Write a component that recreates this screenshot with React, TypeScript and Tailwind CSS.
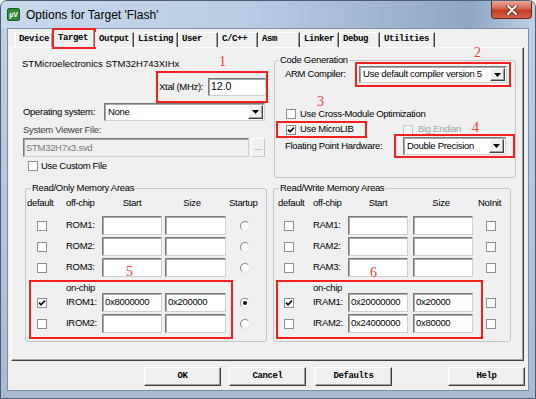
import React from 'react';

type CB = { checked?: boolean; disabled?: boolean };

function Check({ checked = false, disabled = false }: CB) {
  return (
    <span
      className={`flex shrink-0 w-[10px] h-[10px] border items-center justify-center ${
        disabled ? 'border-[#c9c9c9] bg-[#f3f3f3]' : 'border-[#8e8f8f] bg-white'
      }`}
    >
      {checked && (
        <svg width="8" height="8" viewBox="0 0 8 8">
          <polyline points="1,3.6 3,5.8 7,1.6" fill="none" stroke="#111" strokeWidth="1.7" />
        </svg>
      )}
    </span>
  );
}

function Radio({ checked = false }: { checked?: boolean }) {
  return (
    <span className="flex shrink-0 w-[10px] h-[10px] rounded-full border border-[#e2e2e2] border-t-[#8a8a8a] border-l-[#8a8a8a] bg-white items-center justify-center">
      {checked && <span className="w-[4px] h-[4px] rounded-full bg-[#111]" />}
    </span>
  );
}

function Edit({ className = '', value = '', disabled = false }: { className?: string; value?: string; disabled?: boolean }) {
  return (
    <div
      className={`shrink-0 border border-[#d0d0d0] border-t-[#7a7a7a] border-l-[#7a7a7a] shadow-[inset_1px_1px_0_#a8a8a8] pl-[2px] pt-[1px] leading-[13px] overflow-hidden whitespace-nowrap ${
        disabled ? 'bg-[#f0f0f0] text-[#7a7a7a]' : 'bg-white text-black'
      } ${className}`}
    >
      {value}
    </div>
  );
}

function Combo({ className = '', value }: { className?: string; value: string }) {
  return (
    <div className={`shrink-0 flex bg-white border border-[#d0d0d0] border-t-[#7a7a7a] border-l-[#7a7a7a] shadow-[inset_1px_1px_0_#a8a8a8] p-[1px] pl-[2px] ${className}`}>
      <div className="flex-1 flex items-center pl-[1px] whitespace-nowrap overflow-hidden">{value}</div>
      <div className="w-[15px] shrink-0 flex items-center justify-center bg-[#f0f0f0] border border-t-white border-l-white border-r-[#404040] border-b-[#404040] shadow-[inset_-1px_-1px_0_#a0a0a0]">
        <svg width="7" height="4" viewBox="0 0 7 4">
          <polygon points="0,0 7,0 3.5,4" fill="#000" />
        </svg>
      </div>
    </div>
  );
}

function Btn({ label, className = '' }: { label: string; className?: string }) {
  return (
    <div
      className={`w-[77px] h-[19px] flex items-center justify-center bg-[#f0f0f0] border border-t-white border-l-white border-r-[#404040] border-b-[#404040] shadow-[inset_-1px_-1px_0_#a0a0a0] font-['Liberation_Mono',monospace] font-bold text-[9px] tracking-[-0.4px] ${className}`}
    >
      {label}
    </div>
  );
}

const tabs: { label: string; w: string; sel?: boolean }[] = [
  { label: 'Device', w: 'w-[38px]' },
  { label: 'Target', w: 'w-[42px]', sel: true },
  { label: 'Output', w: 'w-[39px]' },
  { label: 'Listing', w: 'w-[44px]' },
  { label: 'User', w: 'w-[40px]' },
  { label: 'C/C++', w: 'w-[40px]' },
  { label: 'Asm', w: 'w-[42px]' },
  { label: 'Linker', w: 'w-[39px]' },
  { label: 'Debug', w: 'w-[41px]' },
  { label: 'Utilities', w: 'w-[55px]' },
];

function Num({ n, className }: { n: string; className: string }) {
  return (
    <span className={`absolute font-['Liberation_Serif',serif] text-[14px] leading-none tracking-normal text-[#f03c3c] ${className}`}>{n}</span>
  );
}

const RED = 'border-2 border-[#f42020]';

export default function App() {
  return (
    <div className="relative w-[536px] h-[399px] overflow-hidden rounded-t-[7px] border border-[#4d5d72] bg-[linear-gradient(180deg,#bfd1e7_0%,#b2c5dc_60%,#a7bad1_100%)] font-['Liberation_Sans',Arial,sans-serif] text-[9.5px] tracking-[-0.3px] text-black">
      {/* title bar */}
      <div className="h-[27px] flex items-center bg-[linear-gradient(90deg,#c8d9ee_0%,#b9cde5_45%,#98b0cd_78%,#8ea7c5_88%,#bed0e5_100%)]">
        <div className="ml-[6px] w-[13px] h-[13px] rounded-[2px] bg-[#2f8a3a] border border-[#1d5a25] flex items-center justify-center text-white text-[7px] font-bold leading-none tracking-normal">
          µV
        </div>
        <div className="ml-[6px] text-[12px] tracking-normal text-black">Options for Target 'Flash'</div>
      </div>
      {/* close button */}
      <div className="absolute top-0 right-[3px] w-[41px] h-[18px] rounded-b-[4px] border border-t-0 border-[#6b2416] bg-[linear-gradient(180deg,#e9a898_0%,#d3654d_45%,#c23d22_55%,#d0624a_100%)] flex items-center justify-center">
        <svg width="12" height="10" viewBox="0 0 12 10">
          <path d="M2 1 L10 9 M10 1 L2 9" stroke="#5a1a10" strokeWidth="3.4" strokeLinecap="round" />
          <path d="M2 1 L10 9 M10 1 L2 9" stroke="#ffffff" strokeWidth="2" strokeLinecap="round" />
        </svg>
      </div>

      <div className="flex h-[363px]">
        <div className="w-[6px]" />
        {/* client */}
        <div className="w-[522px] h-[363px] bg-[#f0f0f0] border border-[#7d8fa6]">
          {/* tabs */}
          <div className="h-[18px] flex items-end pl-[7px] relative z-10 font-['Liberation_Mono',monospace] font-bold text-[9px] tracking-[-0.4px]">
            {tabs.map((t) =>
              t.sel ? (
                <div
                  key={t.label}
                  className={`${t.w} h-[19px] -mb-[1px] flex items-center pl-[4px] bg-[#f0f0f0] border border-b-0 border-t-white border-l-white border-r-[#404040] shadow-[inset_-1px_0_0_#a0a0a0] outline-2 outline-[#f42020] -outline-offset-1`}
                >
                  {t.label}
                </div>
              ) : (
                <div
                  key={t.label}
                  className={`${t.w} h-[15px] flex items-center pl-[3px] bg-[#f0f0f0] border border-b-0 border-t-white border-l-white border-r-[#404040] shadow-[inset_-1px_0_0_#a0a0a0]`}
                >
                  {t.label}
                </div>
              )
            )}
          </div>

          {/* tab panel */}
          <div className="ml-[3px] w-[513px] h-[314px] flex pl-[10px] pt-[10px] border border-t-white border-l-white border-r-[#404040] border-b-[#404040] shadow-[inset_-1px_-1px_0_#a0a0a0]">
            {/* left column */}
            <div className="w-[246px] flex flex-col">
              <div className="h-[12px] leading-[12px] tracking-normal">STMicroelectronics STM32H743XIHx</div>
              <div className={`mt-[1px] ml-[134px] w-[112px] h-[32px] ${RED} flex items-center justify-between pl-[1px]`}>
                <span>Xtal (MHz):</span>
                <Edit className="w-[58px] h-[18px] text-[10.5px] tracking-normal" value="12.0" />
              </div>
              <div className="h-[18px] flex items-center">
                <span className="w-[82px] pl-[1px]">Operating system:</span>
                <Combo className="w-[161px] h-[18px]" value="None" />
              </div>
              <div className="mt-[3px] h-[12px] leading-[12px] pl-[1px] text-[#444]">System Viewer File:</div>
              <div className="mt-[2px] h-[19px] flex">
                <Edit className="ml-[1px] w-[226px] h-[19px] pt-[2px]" value="STM32H7x3.svd" disabled />
                <div className="ml-[2px] w-[14px] h-[19px] flex items-center justify-center text-[#8a8a8a] bg-[#f0f0f0] border border-[#c8c8c8] border-t-white border-l-white">...</div>
              </div>
              <div className="mt-[3px] h-[12px] flex items-center">
                <span className="ml-[6px]">
                  <Check />
                </span>
                <span className="ml-[3px]">Use Custom File</span>
              </div>

              {/* Read/Only Memory Areas */}
              <fieldset className="mt-[10px] ml-[3px] w-[242px] border border-[#c6c6c6] rounded-[3px] pb-[2px]">
                <legend className="ml-[5px] px-[1px] leading-[12px]">Read/Only Memory Areas</legend>
                <div className="mt-[3px] h-[12px] flex items-center">
                  <span className="w-[40px] pl-[1px]">default</span>
                  <span className="w-[36px]">off-chip</span>
                  <span className="w-[60px] text-center">Start</span>
                  <span className="ml-[3px] w-[61px] text-center pr-[7px]">Size</span>
                  <span className="pl-[3px]">Startup</span>
                </div>
                {['ROM1:', 'ROM2:', 'ROM3:'].map((r, i) => (
                  <div key={r} className={`${i === 0 ? 'mt-[7px]' : 'mt-[2px]'} h-[19px] flex items-center`}>
                    <span className="w-[40px] flex">
                      <span className="ml-[11px]">
                        <Check />
                      </span>
                    </span>
                    <span className="w-[36px]">{r}</span>
                    <Edit className="w-[60px] h-[19px]" />
                    <Edit className="ml-[3px] w-[61px] h-[19px]" />
                    <span className="ml-[14px]">
                      <Radio />
                    </span>
                  </div>
                ))}
                <div className="mt-[3px] flex">
                  <div className={`ml-[3px] w-[204px] ${RED} pb-[4px]`}>
                    <div className="h-[11px] leading-[11px] pl-[35px]">on-chip</div>
                    {[
                      ['IROM1:', '0x8000000', '0x200000', true],
                      ['IROM2:', '', '', false],
                    ].map(([r, s, z, c], i) => (
                      <div key={r as string} className={`${i === 0 ? '' : 'mt-[2px]'} h-[19px] flex items-center`}>
                        <span className="w-[35px] flex">
                          <span className="ml-[6px]">
                            <Check checked={c as boolean} />
                          </span>
                        </span>
                        <span className="w-[36px]">{r as string}</span>
                        <Edit className="w-[60px] h-[19px]" value={s as string} />
                        <Edit className="ml-[3px] w-[61px] h-[19px]" value={z as string} />
                      </div>
                    ))}
                  </div>
                  <div className="pt-[13px] flex flex-col">
                    <div className="h-[19px] flex items-center pl-[7px]">
                      <Radio checked />
                    </div>
                    <div className="mt-[2px] h-[19px] flex items-center pl-[7px]">
                      <Radio />
                    </div>
                  </div>
                </div>
              </fieldset>
            </div>

            {/* right column */}
            <div className="ml-[5px] w-[238px] flex flex-col">
              <fieldset className="-mt-[4px] ml-[1px] w-[237px] border border-[#c6c6c6] rounded-[3px] pb-[19px]">
                <legend className="ml-[4px] px-[1px] leading-[12px]">Code Generation</legend>
                <div className="-mt-[4px] h-[25px] flex items-center">
                  <span className="w-[80px] pl-[10px]">ARM Compiler:</span>
                  <div className={`w-[156px] h-[25px] -mr-[1px] ${RED} flex items-center`}>
                    <Combo className="ml-[2px] w-[148px] h-[17px]" value="Use default compiler version 5" />
                  </div>
                </div>
                <div className="mt-[21px] h-[12px] flex items-center">
                  <span className="ml-[11px]">
                    <Check />
                  </span>
                  <span className="ml-[4px]">Use Cross-Module Optimization</span>
                </div>
                <div className="mt-[1px] h-[17px] flex items-center">
                  <div className={`ml-[1px] w-[91px] h-[17px] ${RED} flex items-center`}>
                    <span className="ml-[8px]">
                      <Check checked />
                    </span>
                    <span className="ml-[4px]">Use MicroLIB</span>
                  </div>
                  <span className="ml-[36px]">
                    <Check disabled />
                  </span>
                  <span className="ml-[5px] text-[#a8a8a8]">Big Endian</span>
                </div>
                <div className="-mt-[4px] h-[24px] flex items-center">
                  <span className="w-[119px] pl-[10px]">Floating Point Hardware:</span>
                  <div className={`w-[121px] h-[24px] ${RED} flex items-center`}>
                    <Combo className="ml-[7px] w-[103px] h-[18px]" value="Double Precision" />
                  </div>
                </div>
              </fieldset>

              {/* Read/Write Memory Areas */}
              <fieldset className="mt-[4px] w-[238px] border border-[#c6c6c6] rounded-[3px] pb-[2px]">
                <legend className="ml-[5px] px-[1px] leading-[12px]">Read/Write Memory Areas</legend>
                <div className="mt-[3px] h-[12px] flex items-center">
                  <span className="w-[39px] pl-[4px]">default</span>
                  <span className="w-[35px]">off-chip</span>
                  <span className="w-[60px] text-center">Start</span>
                  <span className="ml-[5px] w-[60px] text-center pr-[4px]">Size</span>
                  <span className="pl-[5px]">NoInit</span>
                </div>
                {['RAM1:', 'RAM2:', 'RAM3:'].map((r, i) => (
                  <div key={r} className={`${i === 0 ? 'mt-[7px]' : 'mt-[2px]'} h-[19px] flex items-center`}>
                    <span className="w-[39px] flex">
                      <span className="ml-[10px]">
                        <Check />
                      </span>
                    </span>
                    <span className="w-[35px]">{r}</span>
                    <Edit className="w-[60px] h-[19px]" />
                    <Edit className="ml-[5px] w-[60px] h-[19px]" />
                    <span className="ml-[13px]">
                      <Check />
                    </span>
                  </div>
                ))}
                <div className="mt-[3px] flex">
                  <div className={`ml-[2px] w-[207px] ${RED} pb-[4px]`}>
                    <div className="h-[11px] leading-[11px] pl-[35px]">on-chip</div>
                    {[
                      ['IRAM1:', '0x20000000', '0x20000', true],
                      ['IRAM2:', '0x24000000', '0x80000', false],
                    ].map(([r, s, z, c], i) => (
                      <div key={r as string} className={`${i === 0 ? '' : 'mt-[2px]'} h-[19px] flex items-center`}>
                        <span className="w-[35px] flex">
                          <span className="ml-[6px]">
                            <Check checked={c as boolean} />
                          </span>
                        </span>
                        <span className="w-[35px]">{r as string}</span>
                        <Edit className="w-[60px] h-[19px]" value={s as string} />
                        <Edit className="ml-[5px] w-[60px] h-[19px]" value={z as string} />
                      </div>
                    ))}
                  </div>
                  <div className="pt-[13px] flex flex-col">
                    <div className="h-[19px] flex items-center pl-[3px]">
                      <Check />
                    </div>
                    <div className="mt-[2px] h-[19px] flex items-center pl-[3px]">
                      <Check />
                    </div>
                  </div>
                </div>
              </fieldset>
            </div>
          </div>

          {/* buttons */}
          <div className="mt-[6px] flex">
            <Btn label="OK" className="ml-[136px]" />
            <Btn label="Cancel" className="ml-[8px]" />
            <Btn label="Defaults" className="ml-[9px]" />
            <Btn label="Help" className="ml-[56px]" />
          </div>
        </div>
        <div className="w-[6px]" />
      </div>

      <Num n="1" className="left-[218px] top-[54px]" />
      <Num n="2" className="left-[473px] top-[45px]" />
      <Num n="3" className="left-[316px] top-[94px]" />
      <Num n="4" className="left-[471px] top-[120px]" />
      <Num n="5" className="left-[125px] top-[264px]" />
      <Num n="6" className="left-[369px] top-[265px]" />
    </div>
  );
}
